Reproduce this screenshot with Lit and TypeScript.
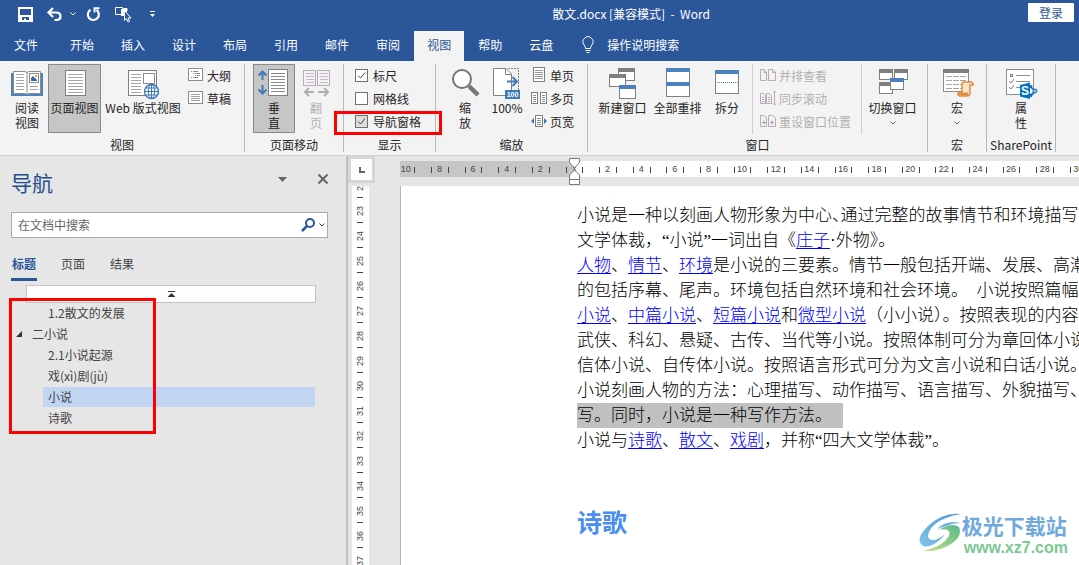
import { LitElement, html, css, svg, nothing } from "lit";
import { customElement } from "lit/decorators.js";
import { classMap } from "lit/directives/class-map.js";

const lines = (x: number, w: number, ys: number[], c = "#a6a6a6") =>
  ys.map((y) => svg`<rect x=${x} y=${y} width=${w} height="1" fill=${c} />`);

const win = (x: number, y: number, w: number, h: number, c: string) => svg`
  <rect x=${x + 0.5} y=${y + 0.5} width=${w - 1} height=${h - 1} fill="#fff" stroke="#7f7f7f" />
  <rect x=${x} y=${y} width=${w} height="4" fill=${c} />`;

const big = (body: unknown, w = 32) => html`<svg class="ico" width=${w} height="32" viewBox="0 0 ${w} 32" aria-hidden="true">${body}</svg>`;
const small = (body: unknown) => html`<svg class="sico" width="16" height="16" viewBox="0 0 16 16" aria-hidden="true">${body}</svg>`;

const chevron = html`<svg class="chev" width="6" height="4" viewBox="0 0 6 4" aria-hidden="true"><path d="M.5 .5L3 3L5.500 .5" fill="none" stroke="currentColor" /></svg>`;

const icons = {
  read: big(svg`
    <path d="M0 5H4V28H0zM28 5H32V28H28z" fill="#4a82bd" /><path d="M1 26H31V28H1z" fill="#4a82bd" />
    <path d="M2.500 3.500H13Q16 3.500 16 5Q16 3.500 19 3.500H29.500V25.500H19Q16 25.500 16 27Q16 25.500 13 25.500H2.500z" fill="#fff" stroke="#8c8c8c" />
    <path d="M16 5V27" stroke="#8c8c8c" />
    ${lines(5, 8, [6, 9, 12, 15, 18, 21])}${lines(19, 8, [18, 21])}
    <rect x="18.500" y="5.500" width="9" height="9" fill="#fff" stroke="#8c8c8c" />
    <path d="M20 13V10L22 8L26 12V13z" fill="#2f6ba8" /><rect x="24" y="7" width="2" height="2" fill="#f0a24a" />`),
  page: big(svg`<rect x="6.500" y="2.500" width="20" height="25" fill="#fff" stroke="#7f7f7f" />${lines(9, 15, [6, 9, 12, 15, 18, 21, 24])}`),
  web: big(svg`
    <rect x="1.500" y="2.500" width="28" height="25" fill="#fff" stroke="#7f7f7f" />
    ${lines(4, 10, [6, 9, 12, 15, 18, 21, 24])}<rect x="16.500" y="5.500" width="11" height="10" fill="#fff" stroke="#8c8c8c" />
    <circle cx="24.500" cy="23.500" r="7" fill="#fff" stroke="#3d7ab8" stroke-width="1.400" />
    <ellipse cx="24.500" cy="23.500" rx="3.200" ry="7" fill="none" stroke="#3d7ab8" />
    <path d="M24.500 16.500V30.500M17.500 23.500H31.500M18.500 20H30.500M18.500 27H30.500" stroke="#3d7ab8" />`),
  vertical: big(svg`
    <path d="M4.500 3V12M.5 7.500L4.500 3.500L8.500 7.500M4.500 17V26M.5 21.500L4.500 25.500L8.500 21.500" fill="none" stroke="#3d7ab8" stroke-width="2" />
    <rect x="10.500" y="1.500" width="19" height="26" fill="#fff" stroke="#7f7f7f" />${lines(13, 14, [5, 8, 11, 14, 17, 20, 23], "#8c8c8c")}`),
  flip: big(svg`
    <rect x="3.500" y="2.500" width="12" height="15" fill="#f6f1f6" stroke="#b5adb5" /><rect x="17.500" y="2.500" width="12" height="15" fill="#f6f1f6" stroke="#b5adb5" />
    ${lines(6, 8, [5, 8, 11, 14], "#c4bcc4")}${lines(20, 8, [5, 8, 11, 14], "#c4bcc4")}
    <path d="M14 24H5M9 20L5 24L9 28M18 24H28M24 20L28 24L24 28" fill="none" stroke="#b0b0b0" stroke-width="2" />`),
  zoom: big(svg`<circle cx="13" cy="11" r="9" fill="#fff" stroke="#757575" stroke-width="2" /><path d="M20 18L29 27" stroke="#757575" stroke-width="4.500" />`),
  full: big(svg`
    <path d="M2.500 .5H15L20.500 6V27.500H2.500z" fill="#fff" stroke="#808080" /><path d="M14.500 .5V6.500H20.500" fill="none" stroke="#808080" />
    <path d="M17 .5H27.500V22" fill="none" stroke="#808080" stroke-dasharray="2 1" />
    <path d="M16 13.500H26M21.500 9L26 13.500L21.500 18" fill="none" stroke="#3d7ab8" stroke-width="2" />
    <rect x="14" y="22" width="15" height="9" fill="#3d7ab8" /><text x="21.500" y="29" text-anchor="middle" class="tag">100</text>`),
  newWin: big(svg`${win(11, 0, 17, 13, "#7f7f7f")}${win(2, 6, 17, 13, "#7f7f7f")}${win(12, 17, 17, 14, "#4a82bd")}`),
  arrange: big(svg`<rect x="4.500" y=".5" width="23" height="28" fill="#fff" stroke="#7f7f7f" /><path d="M4 0H28V4H4zM4 14H28V18H4z" fill="#4a82bd" />`),
  split: big(svg`<rect x="4.500" y="2.500" width="23" height="23" fill="#fff" stroke="#7f7f7f" /><path d="M4 2H28V6H4z" fill="#4a82bd" /><path d="M6 14.500H27" stroke="#4a82bd" stroke-dasharray="1 1" />`),
  switchWin: big(svg`${win(2, 1, 14, 11, "#7f7f7f")}${win(17, 1, 14, 11, "#7f7f7f")}${win(2, 14, 14, 12, "#7f7f7f")}${win(13, 10, 14, 12, "#4a82bd")}`),
  macro: big(svg`
    <rect x="3.500" y="1.500" width="25" height="22" fill="#fff" stroke="#8c8c8c" /><rect x="3" y="1" width="26" height="4" fill="#7f7f7f" />
    ${[8, 12, 16, 20].map((y) => svg`<path d="M6 ${y}.500H26" stroke="#a6a6a6" stroke-dasharray="6 1" />`)}
    <path d="M22 16Q22 14 24 14H31Q33 14 33 17H30V25Q30 28 27 28H20Q18 28 18 25H22z" fill="#fbe3cc" stroke="#e58a3c" stroke-width="1.500" />
    <path d="M19 26H28" stroke="#e58a3c" stroke-width="3" />`, 34),
  props: big(svg`
    <rect x="2.500" y="1.500" width="27" height="25" fill="#fff" stroke="#8c8c8c" /><rect x="6.500" y="6.500" width="2" height="2" fill="none" stroke="#7f7f7f" />
    <path d="M12 7.500H26M12 13.500H26M12 19.500H17" stroke="#8c8c8c" /><path d="M5 13L7 15L10 11M5 19L7 21L10 17" fill="none" stroke="#7f7f7f" />
    <path d="M26 18.500L31 23L26 27.500" fill="none" stroke="#0072c6" stroke-width="1.500" /><circle cx="27" cy="18.500" r="1.500" fill="#0072c6" /><circle cx="31" cy="23" r="2" fill="#8fc1ea" stroke="#0072c6" /><circle cx="27" cy="27.500" r="1.500" fill="#0072c6" />
    <path d="M16 17L26 14.500V31L16 28.500z" fill="#0072c6" /><text x="21" y="27" text-anchor="middle" class="sp">S</text>`, 34),
  outline: small(svg`<rect x=".5" y="1.500" width="14" height="12" fill="#fff" stroke="#8c8c8c" /><path d="M3 4.500H4M5 4.500H10M5 6.500H6M7 6.500H12M7 8.500H8M9 8.500H12M3 10.500H4M5 10.500H10" stroke="#8c8c8c" />`),
  draft: small(svg`<rect x=".5" y="1.500" width="14" height="12" fill="#fff" stroke="#8c8c8c" />${lines(3, 9, [4, 6, 8, 10], "#a0a0a0")}`),
  one: small(svg`<rect x="2.500" y=".5" width="11" height="14" fill="#fff" stroke="#808080" />${lines(4, 8, [3, 5, 7, 9, 11], "#9a9a9a")}`),
  many: small(svg`<rect x=".5" y="2.500" width="6" height="11" fill="#fff" stroke="#808080" /><rect x="9.500" y="2.500" width="6" height="11" fill="#fff" stroke="#808080" />${lines(2, 3, [5, 7, 9, 11], "#8c8c8c")}${lines(11, 3, [5, 7, 9, 11], "#8c8c8c")}`),
  wide: small(svg`<path d="M0 8L3 5V11zM16 8L13 5V11z" fill="#3d7ab8" /><rect x="4.500" y="2.500" width="7" height="11" fill="#fff" stroke="#808080" />${lines(6, 4, [5, 7, 9, 11], "#8c8c8c")}`),
  side: small(svg`<path d="M.5 2.500H4L6.500 5V13.500H.5zM4 2.500V5.500H6.500M8.500 2.500H12.500L15.500 5V13.500H8.500zM12.500 2.500V5.500H15.500" fill="#f6f1f6" stroke="#b5adb5" />`),
  sync: small(svg`<path d="M.5 3.500H3L5.500 5.500V13.500H.5zM6.500 3.500H9L11.500 5.500V13.500H6.500z" fill="#f6f1f6" stroke="#b5adb5" /><path d="M2 7.500H4M2 9.500H4M2 11.500H4M8 7.500H10M8 9.500H10M8 11.500H10M14.500 1V15M13 2.500L14.500 1L16 2.500M13 13.500L14.500 15L16 13.500" fill="none" stroke="#b5adb5" />`),
  reset: small(svg`<path d="M.5 2.500H4L6.500 5V13.500H.5zM8.500 2.500H12.500L15.500 5V13.500H8.500z" fill="#f6f1f6" stroke="#b5adb5" /><path d="M2 9.500H6M4 7.500V11.500M10 9.500H14M12 7.500V11.500" stroke="#a8a0a8" />`),
};

const TABS = ["文件", "开始", "插入", "设计", "布局", "引用", "邮件", "审阅", "视图", "帮助", "云盘"];
const H_RULER = Array.from({ length: 21 }, (_, i) => Math.abs(10 - 2 * i));
const V_RULER = Array.from({ length: 16 }, (_, i) => 22 + i);
const OUTLINE = [
  { text: "1.2散文的发展", level: 2 },
  { text: "二小说", level: 1 },
  { text: "2.1小说起源", level: 2 },
  { text: "戏(xì)剧(jù)", level: 2 },
  { text: "小说", level: 2, current: true },
  { text: "诗歌", level: 2 },
];

const link = (t: string) => html`<a href="#">${t}</a>`;

@customElement("word-titlebar")
class WordTitlebar extends LitElement {
  static styles = css`
    :host { display: block; background: #2b579a; color: #fff; }
    button { font: inherit; border: 0; background: none; color: inherit; padding: 0; cursor: pointer; }
    .bar { display: grid; grid-template-columns: 1fr auto 1fr; align-items: center; height: 30px; }
    .quick { display: flex; align-items: center; padding: 0 0 2px 18px; }
    .quick button { display: flex; }
    .undo { margin-left: 13px; }
    .drop { margin-left: 7px; }
    .redo { margin-left: 10px; }
    .touch { margin-left: 14px; }
    .more { margin-left: 17px; }
    .title { font-size: 12px; white-space: pre; padding-left: 183px; padding-bottom: 3px; }
    .login { justify-self: end; margin: 0 5px 5px 0; width: 46px; height: 19px; background: #fff; color: #2b579a; border-radius: 1px; line-height: 19px; }
    .tabs { display: flex; gap: 1px; height: 31px; }
    .tab { padding: 0 13px 3px; line-height: 27px; height: 30px; margin-top: 1px; white-space: nowrap; }
    .tab.file { padding-left: 14px; margin-right: 5px; }
    .tab.on { background: #f3f3f3; color: #2b579a; }
    .tell { display: flex; align-items: center; gap: 13px; margin-left: 15px; padding-bottom: 2px; }
  `;
  render() {
    return html`
      <header class="bar">
        <div class="quick">
          <button aria-label="保存"><svg width="15" height="15" viewBox="0 0 15 15"><path d="M1 1H14V14H1z" fill="none" stroke="#fff" stroke-width="2" /><path d="M1 8H14V14H1z" fill="#fff" /><path d="M4 10H11V13H8V11.500H6V13H4z" fill="#2b579a" /></svg></button>
          <button class="undo" aria-label="撤消"><svg width="17" height="15" viewBox="0 0 17 15"><path d="M7 1L2.500 5.500L7 10M3 5.500H10Q14.500 5.500 14.500 9.500Q14.500 13 10 13H8.500" fill="none" stroke="#fff" stroke-width="2.200" /></svg></button>
          <button class="drop" aria-label="撤消列表">${chevron}</button>
          <button class="redo" aria-label="重复"><svg width="15" height="15" viewBox="0 0 15 15"><path d="M4.500 2.800A5.500 5.500 0 1 0 10.500 3" fill="none" stroke="#fff" stroke-width="2.200" /><path d="M8.500 5.500V1.200H13.500" fill="none" stroke="#fff" stroke-width="2" /></svg></button>
          <button class="touch" aria-label="触摸/鼠标模式"><svg width="17" height="17" viewBox="0 0 17 17"><path d="M6 8.500H.5V1.500H7.500V2.500H12V5" fill="none" stroke="#fff" /><path d="M6 3H12V6H9V10H6z" fill="#fff" /><path d="M9.500 4.500V14.500L11.500 12.500L13 16L14.500 15.300L13.200 12H16z" fill="#2b579a" stroke="#fff" /></svg></button>
          <button class="more" aria-label="自定义快速访问工具栏"><svg width="7" height="6" viewBox="0 0 7 6"><path d="M1 0H6V1H1zM1 3H6L3.500 6z" fill="#fff" /></svg></button>
        </div>
        <div class="title">散文.docx [兼容模式]  -  Word</div>
        <button class="login">登录</button>
      </header>
      <nav class="tabs">
        ${TABS.map((t) => html`<button class=${classMap({ tab: true, file: t === "文件", on: t === "视图" })}>${t}</button>`)}
        <button class="tell">
          <svg width="12" height="18" viewBox="0 0 12 18" aria-hidden="true"><path d="M3.500 12.500Q3.500 10.500 2 8.800A5 5 0 1 1 10 8.800Q8.500 10.500 8.500 12.500z" fill="none" stroke="#fff" /><path d="M3.500 14.500H8.500M4.500 16.500H7.500" stroke="#fff" /></svg>
          <span>操作说明搜索</span>
        </button>
      </nav>`;
  }
}

@customElement("word-ribbon")
class WordRibbon extends LitElement {
  static styles = css`
    :host { display: flex; background: #f3f3f3; border-bottom: 1px solid #d2d2d2; padding: 3px 0; color: #262626; line-height: 15px; }
    button { font: inherit; line-height: 15px; border: 1px solid transparent; background: none; color: inherit; padding: 0; cursor: pointer; }
    .group { position: relative; display: flex; flex-direction: column; padding: 0 8px; border-right: 1px solid #b8b8b8; }
    .group.bare { padding: 0 3px; }
    .items { display: flex; gap: 2px; height: 73px; }
    .bare .items { justify-content: center; }
    .caption { text-align: center; line-height: 15px; }
    .large { display: flex; flex-direction: column; align-items: center; min-width: 42px; height: 69px; padding-top: 3px; white-space: nowrap; }
    .large.slim { min-width: 38px; }
    .large.roomy { min-width: 53px; }
    .large.broad { min-width: 80px; }
    .large.on { background: #c6c6c6; border-color: #8a8a8a; }
    .large:disabled { color: #b1b1b1; }
    .ico { flex: none; }
    .chev { margin-top: 6px; color: #666; }
    .stack { display: flex; flex-direction: column; gap: 1px; padding: 0 4px 0 2px; }
    .stack button { display: flex; align-items: center; gap: 3px; height: 22px; white-space: nowrap; }
    .stack button:disabled { color: #b1b1b1; }
    .stack.ruled { border-left: 1px solid #d0d0d0; border-right: 1px solid #d0d0d0; margin: 0 2px; padding: 0 9px 0 6px; height: 70px; }
    .checks { display: flex; flex-direction: column; gap: 1px; padding: 0 6px 0 3px; }
    .check { display: flex; align-items: center; gap: 5px; height: 22px; white-space: nowrap; }
    .check input { appearance: none; box-sizing: border-box; width: 13px; height: 13px; margin: 0; border: 1px solid #707070; background: #fff no-repeat center; }
    .check input:checked { background-image: url("data:image/svg+xml,%3Csvg xmlns='http://www.w3.org/2000/svg' width='11' height='11'%3E%3Cpath d='M2 5.500L4.500 8L9 2.500' fill='none' stroke='%23444'/%3E%3C/svg%3E"); }
    .check.hover input { background-color: #dcdcdc; }
    .mark { position: absolute; left: -10px; right: -7px; top: 47px; height: 18px; border: 3px solid #f00; pointer-events: none; }
    .tag { font: bold 7px "Liberation Sans", sans-serif; fill: #fff; }
    .sp { font: bold 12px "Liberation Sans", sans-serif; fill: #fff; }
  `;
  large(icon: unknown, label: string[], cls = "", disabled = false, drop = false) {
    return html`<button class="large ${cls}" ?disabled=${disabled}>${icon}${label.map((l) => html`<span>${l}</span>`)}${drop ? chevron : nothing}</button>`;
  }
  row(icon: unknown, label: string, disabled = false) {
    return html`<button ?disabled=${disabled}>${icon}<span>${label}</span></button>`;
  }
  render() {
    return html`
      <section class="group">
        <div class="items">
          ${this.large(icons.read, ["阅读", "视图"], "slim")}
          ${this.large(icons.page, ["页面视图"], "on roomy")}
          ${this.large(icons.web, ["Web 版式视图"], "broad")}
          <div class="stack">${this.row(icons.outline, "大纲")}${this.row(icons.draft, "草稿")}</div>
        </div>
        <div class="caption">视图</div>
      </section>
      <section class="group">
        <div class="items">${this.large(icons.vertical, ["垂", "直"], "on")}${this.large(icons.flip, ["翻", "页"], "slim", true)}</div>
        <div class="caption">页面移动</div>
      </section>
      <section class="group">
        <div class="checks items">
          <label class="check"><input type="checkbox" checked />标尺</label>
          <label class="check"><input type="checkbox" />网格线</label>
          <label class="check hover"><input type="checkbox" checked />导航窗格</label>
        </div>
        <div class="caption">显示</div>
        <div class="mark"></div>
      </section>
      <section class="group">
        <div class="items">
          ${this.large(icons.zoom, ["缩", "放"])}${this.large(icons.full, ["100%"], "slim")}
          <div class="stack">${this.row(icons.one, "单页")}${this.row(icons.many, "多页")}${this.row(icons.wide, "页宽")}</div>
        </div>
        <div class="caption">缩放</div>
      </section>
      <section class="group">
        <div class="items">
          ${this.large(icons.newWin, ["新建窗口"], "roomy")}${this.large(icons.arrange, ["全部重排"], "roomy")}${this.large(icons.split, ["拆分"])}
          <div class="stack ruled">${this.row(icons.side, "并排查看", true)}${this.row(icons.sync, "同步滚动", true)}${this.row(icons.reset, "重设窗口位置", true)}</div>
          ${this.large(icons.switchWin, ["切换窗口"], "roomy", false, true)}
        </div>
        <div class="caption">窗口</div>
      </section>
      <section class="group">
        <div class="items">${this.large(icons.macro, ["宏"], "", false, true)}</div>
        <div class="caption">宏</div>
      </section>
      <section class="group bare">
        <div class="items">${this.large(icons.props, ["属", "性"])}</div>
        <div class="caption">SharePoint</div>
      </section>`;
  }
}

@customElement("word-navigation")
class WordNavigation extends LitElement {
  static styles = css`
    :host { display: block; box-sizing: border-box; width: 348px; flex: none; background: #e6e6e6; border-right: 2px solid #c0c0c0; padding: 7px 18px 0 11px; color: #444; }
    button { font: inherit; border: 0; background: none; color: inherit; padding: 0; cursor: pointer; }
    .head { display: flex; align-items: center; height: 38px; }
    h2 { flex: 1; margin: 0; font-size: 21px; font-weight: 400; line-height: 38px; color: #1f4e8c; }
    .head button { display: flex; margin-bottom: 6px; color: #666; }
    .close { margin-left: 31px; }
    .search { display: flex; align-items: center; height: 24px; margin-top: 11px; border: 1px solid #ababab; background: #fff; padding-right: 2px; }
    .search input { flex: 1; min-width: 0; border: 0; outline: 0; background: none; font: inherit; padding: 0 6px; }
    .search input::placeholder { color: #666; opacity: 1; }
    .search button { display: flex; color: #444; }
    .pick { margin-left: 3px; }
    .tabs { display: flex; gap: 23px; margin-top: 14px; }
    .tabs button { padding: 0 1px 3px; height: 29px; line-height: 20px; border-bottom: 3px solid transparent; }
    .tabs .on { color: #2b579a; font-weight: 700; border-color: #2b579a; }
    .top { display: flex; align-items: center; justify-content: center; box-sizing: border-box; height: 18px; width: calc(100% - 27px); margin: 4px 0 0 15px; border: 1px solid #c3c3c3; background: #fdfdfd; }
    .outline { position: relative; }
    .tree { list-style: none; margin: 0; padding: 0 13px 0 0; }
    .tree li { display: flex; margin-left: 32px; padding-left: 5px; line-height: 19px; height: 21px; }
    .tree .root { margin-left: 5px; padding: 0; }
    .tree .root svg { margin: 7px 10px 0 0; }
    .tree .now { background: linear-gradient(#c2d5f2, #c2d5f2) 0 0 / 100% 20px no-repeat; }
    .mark { position: absolute; left: -2px; top: -5px; bottom: -5px; width: 141px; border: 3px solid #f00; pointer-events: none; }
  `;
  render() {
    return html`
      <div class="head">
        <h2>导航</h2>
        <button aria-label="任务窗格选项"><svg width="9" height="5" viewBox="0 0 9 5"><path d="M0 0H9L4.500 5z" fill="currentColor" /></svg></button>
        <button class="close" aria-label="关闭"><svg width="10" height="10" viewBox="0 0 10 10"><path d="M.5 .5L9.500 9.500M9.500 .5L.5 9.500" stroke="currentColor" stroke-width="2" /></svg></button>
      </div>
      <form class="search">
        <input type="text" aria-label="在文档中搜索" placeholder="在文档中搜索" />
        <button type="button" aria-label="搜索"><svg width="15" height="14" viewBox="0 0 15 14"><circle cx="9" cy="5" r="4" fill="none" stroke="#2b579a" stroke-width="2" /><path d="M6 8L1 13" stroke="#2b579a" stroke-width="2.500" /></svg></button>
        <button type="button" class="pick" aria-label="搜索选项">${chevron}</button>
      </form>
      <div class="tabs"><button class="on">标题</button><button>页面</button><button>结果</button></div>
      <button class="top" aria-label="跳转到开头"><svg width="7" height="7" viewBox="0 0 7 7"><path d="M0 0H7V1H0zM3.500 2L7 5.500V6H0V5.500z" fill="#333" /></svg></button>
      <div class="outline">
        <ul class="tree">
          ${OUTLINE.map((o) => html`<li class=${classMap({ root: o.level === 1, now: !!o.current })}>${o.level === 1 ? html`<svg width="6" height="6" viewBox="0 0 6 6" aria-hidden="true"><path d="M6 0V6H0z" fill="#333" /></svg>` : nothing}${o.text}</li>`)}
        </ul>
        <div class="mark"></div>
      </div>`;
  }
}

@customElement("word-document")
class WordDocument extends LitElement {
  static styles = css`
    :host { flex: 1; min-width: 0; display: grid; grid-template-columns: 52px 1fr; grid-template-rows: 30px 1fr; background: #e6e6e6; overflow: hidden; }
    .corner { display: flex; align-items: center; justify-content: center; box-sizing: border-box; width: 27px; height: 27px; border: 3px solid #d6d6d6; background: #fdfdfd; }
    .across { position: relative; margin-top: 5px; height: 16px; }
    .scale { height: 16px; overflow: hidden; background: linear-gradient(90deg, #c6c6c6 175px, #fff 175px); }
    .cells { display: flex; width: 706px; margin-left: -11px; font: 9px/17px "Liberation Sans", sans-serif; color: #444; }
    .cells span { flex: 1; display: flex; align-items: center; justify-content: center; position: relative; height: 17px; }
    .cells span::before, .cells span::after { content: ""; position: absolute; left: 25%; top: 6px; width: 1px; height: 6px; background: #444; }
    .cells span::after { left: 75%; }
    .handle { position: absolute; left: 169px; top: -4px; }
    .down { width: 17px; margin-left: 4px; overflow: hidden; background: #fff; height: 100%; }
    .marks { display: flex; flex-direction: column; margin-top: -13px; font: 9px/17px "Liberation Sans", sans-serif; color: #444; }
    .marks span { flex: none; display: flex; align-items: center; justify-content: center; height: 25px; writing-mode: vertical-rl; transform: rotate(180deg); position: relative; }
    .marks span::after { content: ""; position: absolute; left: 6px; top: 0; width: 6px; height: 1px; background: #444; }
    .sheet { background: #fff; border-left: 1px solid #b4b4b4; padding: 17px 0 0 176px; overflow: hidden; font: 300 17px/25px "Liberation Serif", "Noto Sans CJK SC", sans-serif; color: #000; white-space: nowrap; }
    p { margin: 0; }
    a { color: #00f; text-underline-offset: 2px; text-decoration-thickness: 1px; }
    .sel { display: inline-block; background: #c0c0c0; padding-right: 11px; }
    .tight { font-feature-settings: "halt"; }
    h3 { margin: 55px 0 0; font: bold 25px/26px "Noto Sans CJK SC", sans-serif; color: #4a8df0; }
  `;
  render() {
    return html`
      <div class="corner"><svg width="6" height="6" viewBox="0 0 6 6" aria-hidden="true"><path d="M1 0V5H6" fill="none" stroke="#666" stroke-width="2" /></svg></div>
      <div class="across">
        <div class="scale"><div class="cells">${H_RULER.map((n) => html`<span>${n || ""}</span>`)}</div></div>
        <svg class="handle" width="11" height="29" viewBox="0 0 11 29" aria-hidden="true"><path d="M.5 1.500H10.500V5.500L5.500 11L.5 5.500zM.5 22.500V18L5.500 13L10.500 18V22.500zM.5 22.500H10.500V27.500H.5z" fill="#fff" stroke="#7a7a7a" /><path d="M4 10L5.500 12L7 10M4 14L5.500 12L7 14" stroke="#7a7a7a" fill="none" /></svg>
      </div>
      <div class="down"><div class="marks">${V_RULER.map((n) => html`<span>${n}</span>`)}</div></div>
      <article class="sheet">
        <p>小说是一种以刻画人物形象为中心<span class="tight">、</span>通过完整的故事情节和环境描写来<br />文学体裁，“小说”一词出自《${link("庄子")}·外物》。</p>
        <p>${link("人物")}、${link("情节")}、${link("环境")}是小说的三要素。情节一般包括开端、发展、高潮、<br />的包括序幕、尾声。环境包括自然环境和社会环境。&ensp;小说按照篇幅及<br />${link("小说")}、${link("中篇小说")}、${link("短篇小说")}和${link("微型小说")}（小小说）。按照表现的内容可分<br />武侠、科幻、悬疑、古传、当代等小说。按照体制可分为章回体小说、<br />信体小说、自传体小说。按照语言形式可分为文言小说和白话小说。</p>
        <p>小说刻画人物的方法：心理描写、动作描写、语言描写、外貌描写、神<br /><span class="sel">写。同时，小说是一种写作方法。</span></p>
        <p>小说与${link("诗歌")}、${link("散文")}、${link("戏剧")}，并称“四大文学体裁”。</p>
        <h3>诗歌</h3>
      </article>`;
  }
}

@customElement("app-root")
class AppRoot extends LitElement {
  static styles = css`
    :host { position: relative; display: flex; flex-direction: column; height: 100vh; overflow: hidden; background: #e6e6e6; font: 12px/16px "Noto Sans CJK SC", sans-serif; }
    .work { flex: 1; min-height: 0; display: flex; }
    .brand { position: absolute; right: 11px; bottom: 9px; display: flex; align-items: center; font-weight: 700; }
    .brand svg { margin-right: -6px; }
    .name { font-size: 21px; line-height: 30px; color: #6fa9dc; }
    .site { font: bold 16px/16px "Liberation Sans", sans-serif; color: #7cc993; padding-left: 2px; }
  `;
  render() {
    return html`
      <word-titlebar></word-titlebar>
      <word-ribbon></word-ribbon>
      <main class="work"><word-navigation></word-navigation><word-document></word-document></main>
      <div class="brand">
        <svg width="49" height="42" viewBox="0 0 49 42" aria-hidden="true">
          <defs>
            <linearGradient id="sky" x1="1" y1="0" x2="0" y2="1"><stop offset="0" stop-color="#4f97d6" /><stop offset="1" stop-color="#7fc4e8" /></linearGradient>
            <linearGradient id="leaf" x1="1" y1="0" x2="0" y2="1"><stop offset="0" stop-color="#58b98a" /><stop offset="1" stop-color="#c5e08a" /></linearGradient>
          </defs>
          <path d="M42 2Q24 0 9 14Q-3 26 2 32Q6 37 15 32Q21 29 26 22Q19 28 14 28Q7 28 10 20Q14 11 27 6Q34 3 42 2z" fill="url(#sky)" />
          <path d="M18 17Q26 8 42 11Q33 11 27 14Q21 16 18 17z" fill="url(#sky)" />
          <path d="M20 18Q32 10 40 15Q44 24 32 32Q20 40 4 39Q18 36 26 29Q32 23 30 19Q27 16 20 18z" fill="url(#leaf)" />
        </svg>
        <div><div class="name">极光下载站</div><div class="site">www.xz7.com</div></div>
      </div>`;
  }
}
